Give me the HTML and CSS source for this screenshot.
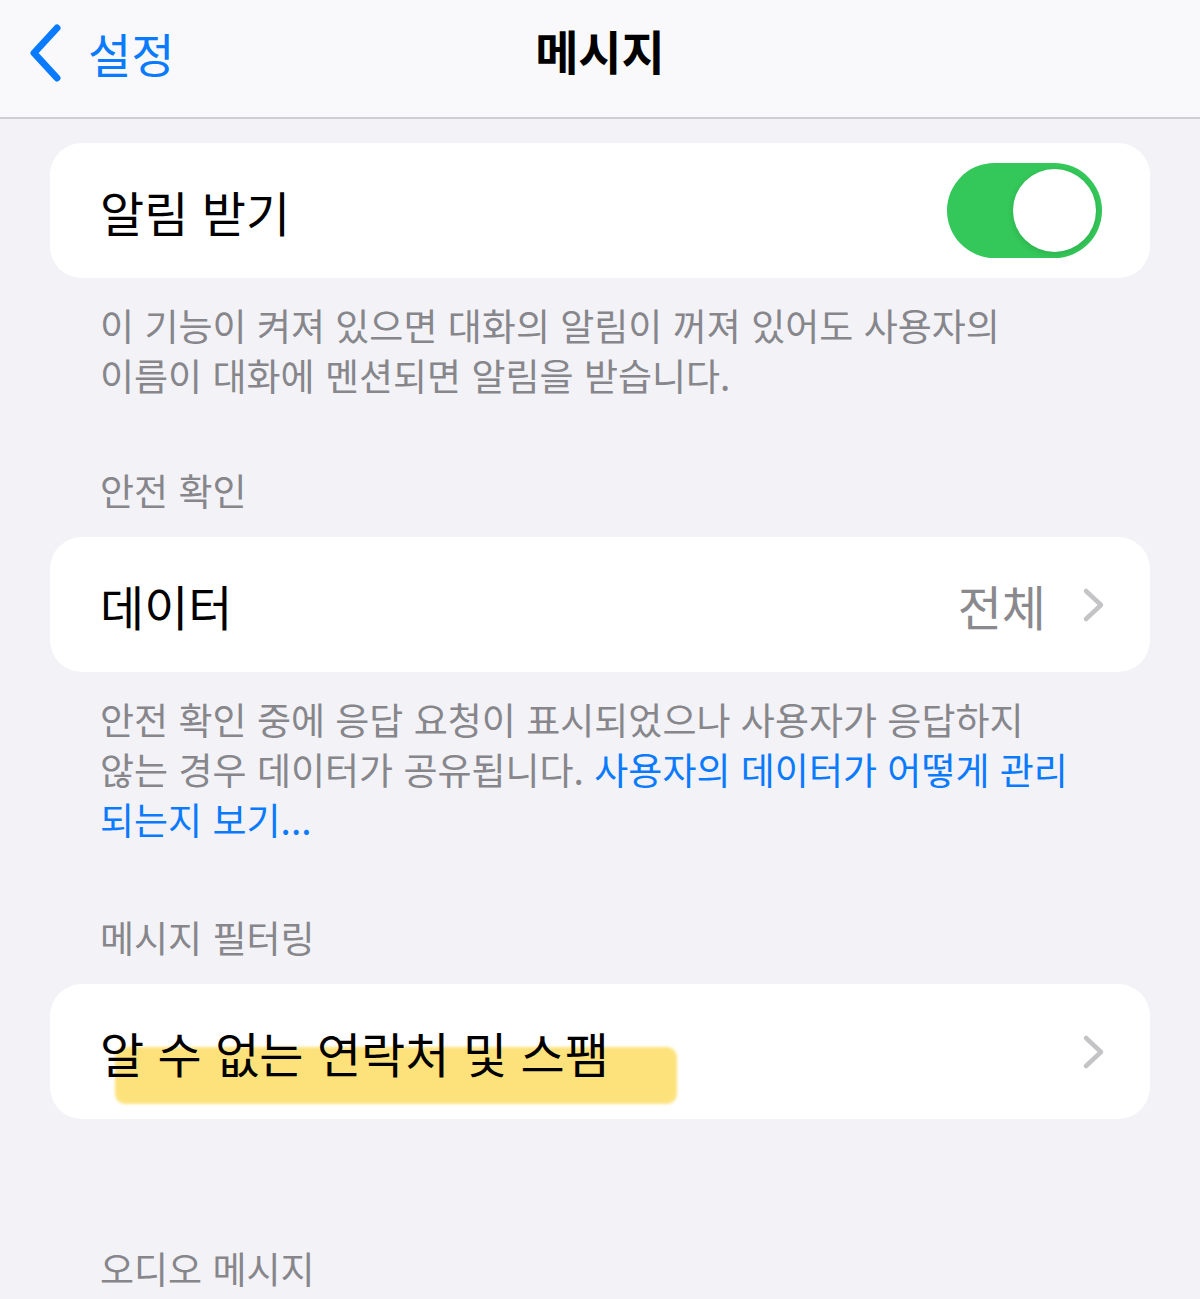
FILE: index.html
```html
<!DOCTYPE html>
<html lang="ko">
<head>
<meta charset="utf-8">
<title>메시지</title>
<link rel="stylesheet" href="styles.css">
</head>
<body>
<header class="navbar">
  <a class="back">
    <svg class="back-icon" viewBox="0 0 34 58" width="34" height="58" aria-hidden="true">
      <path d="M29 4 L6 29 L29 54" fill="none" stroke="#0a7aff" stroke-width="7" stroke-linecap="round" stroke-linejoin="round"/>
    </svg>
    <span class="back-label">설정</span>
  </a>
  <h1 class="title">메시지</h1>
  <span class="spacer"></span>
</header>

<main class="content">
  <section class="card">
    <span class="row-label">알림 받기</span>
    <span class="toggle on"><span class="knob"></span></span>
  </section>
  <p class="footnote">이 기능이 켜져 있으면 대화의 알림이 꺼져 있어도 사용자의<br>이름이 대화에 멘션되면 알림을 받습니다.</p>

  <h2 class="section-header first">안전 확인</h2>
  <section class="card">
    <span class="row-label">데이터</span>
    <span class="row-right">
      <span class="row-value">전체</span>
      <svg class="chevron" viewBox="0 0 24 36" width="24" height="36" aria-hidden="true">
        <path d="M4 4 L19 18 L4 32" fill="none" stroke="#c4c4c7" stroke-width="4.5" stroke-linecap="round" stroke-linejoin="round"/>
      </svg>
    </span>
  </section>
  <p class="footnote">안전 확인 중에 응답 요청이 표시되었으나 사용자가 응답하지<br>않는 경우 데이터가 공유됩니다. <a class="link">사용자의 데이터가 어떻게 관리<br>되는지 보기...</a></p>

  <h2 class="section-header">메시지 필터링</h2>
  <section class="card highlighted">
    <span class="marker"></span>
    <span class="row-label">알 수 없는 연락처 및 스팸</span>
    <svg class="chevron" viewBox="0 0 24 36" width="24" height="36" aria-hidden="true">
      <path d="M4 4 L19 18 L4 32" fill="none" stroke="#c4c4c7" stroke-width="4.5" stroke-linecap="round" stroke-linejoin="round"/>
    </svg>
  </section>

  <h2 class="section-header last">오디오 메시지</h2>
</main>
</body>
</html>
```

FILE: styles.css
```css
* { box-sizing: border-box; }

html, body {
  margin: 0;
  padding: 0;
}

body {
  background: #f2f2f7;
  font-family: "Noto Sans CJK KR", "Noto Sans", sans-serif;
  color: #000;
  width: 1200px;
  height: 1299px;
  overflow: hidden;
}

.navbar {
  height: 119px;
  background: #f9f9fb;
  border-bottom: 2px solid #cfcfd2;
  display: grid;
  grid-template-columns: 1fr auto 1fr;
  align-items: center;
  padding: 0 28px 18px 28px;
}

.back {
  display: flex;
  align-items: center;
  gap: 26px;
  color: #0a7aff;
  margin-top: 6px;
}

.back-icon { display: block; }

.back-label {
  font-size: 47px;
  line-height: 1;
}

.title {
  margin: 0;
  font-size: 47px;
  font-weight: 700;
  line-height: 1;
}

.content {
  padding: 0 50px;
}

.card {
  position: relative;
  background: #fff;
  border-radius: 32px;
  height: 135px;
  margin-top: 24px;
  display: flex;
  align-items: center;
  justify-content: space-between;
  padding: 0 48px 0 50px;
}

.row-label {
  position: relative;
  font-size: 48px;
  line-height: 1;
}

.row-right {
  display: flex;
  align-items: center;
  gap: 36px;
}

.row-value {
  font-size: 48px;
  color: #8a8a8e;
  line-height: 1;
}

.chevron { display: block; margin-right: -4px; }

.toggle {
  width: 155px;
  height: 95px;
  border-radius: 48px;
  background: #34c759;
  position: relative;
  display: flex;
  align-items: center;
  justify-content: flex-end;
  padding-right: 6px;
}

.knob {
  width: 83px;
  height: 83px;
  border-radius: 50%;
  background: #fff;
  box-shadow: 0 2px 6px rgba(0,0,0,0.12);
}

.footnote {
  margin: 22px 0 0 50px;
  font-size: 37px;
  line-height: 50px;
  color: #86868b;
}

.link { color: #0a7aff; }

.section-header {
  margin: 68px 0 0 50px;
  font-size: 37px;
  line-height: 50px;
  font-weight: 400;
  color: #86868b;
}

.section-header.first { margin-top: 65px; }

.section-header + .card { margin-top: 22px; }

.section-header.last { margin-top: 124px; }

.marker {
  position: absolute;
  left: 65px;
  top: 63px;
  width: 562px;
  height: 57px;
  border-radius: 10px;
  background: #fde27c;
  filter: blur(1.5px);
}
```
